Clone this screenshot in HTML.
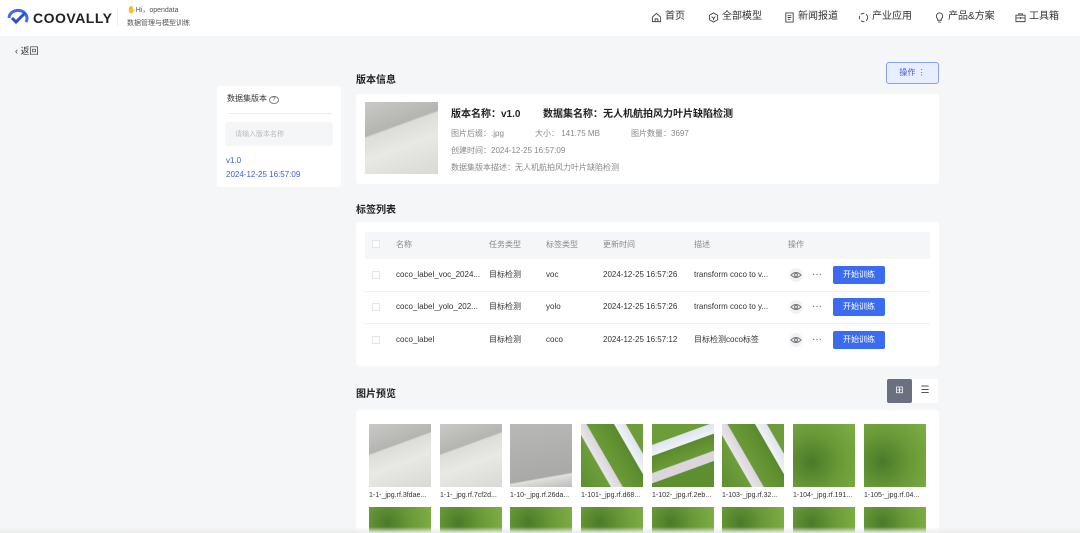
<!DOCTYPE html>
<html style="width:1080px;height:533px;overflow:hidden"><head><meta charset="utf-8"><style>
*{box-sizing:border-box;margin:0;padding:0}
body{width:1080px;height:533px;overflow:hidden;background:#f5f6f8;font-family:"Liberation Sans","Noto Sans CJK SC",sans-serif;color:#333;position:relative}
.abs{position:absolute}
.hdr{left:0;top:0;width:1080px;height:36px;background:#fff}
.nav{top:11px;font-size:10px;line-height:12px;color:#333;display:flex;align-items:center;gap:3px;white-space:nowrap}
.nav svg{width:11px;height:11px}
.card{background:#fff;border-radius:3px}
.t{font-size:8px;line-height:10px;white-space:nowrap}
.g{color:#888}
.btn{background:#3b6cf0;color:#fff;font-size:8px;width:52px;height:18px;border-radius:2px;text-align:center;line-height:18px}
.th{width:62px;height:63px}
.grey{background:linear-gradient(160deg,#c9c9c7 0%,#b4b4b1 35%,#dcdcd9 37%,#e8e8e5 60%,#d8d8d4 100%)}
.green{background:radial-gradient(circle at 30% 60%,#4a7a28,#6a9a38 50%,#7fae45)}
.road{background:linear-gradient(60deg,#5d8f30 0%,#6e9e3a 30%,#e6e6ea 31%,#dcd6dc 42%,#6b9b38 43%,#5a8a2c 70%,#f0f2f6 71%,#dfe4ee 82%,#6d9c3a 83%)}
.lbl{font-size:7px;line-height:9px;color:#333;width:66px;white-space:nowrap;overflow:hidden}
.row2{height:26px}
</style></head><body>
<div class="abs hdr"></div>
<svg class="abs" style="left:6px;top:8px" width="24" height="20" viewBox="0 0 24 20"><path d="M3 10a9 8 0 1 1 17 4" fill="none" stroke="#3b6cf0" stroke-width="3"/><path d="M6 10l4 4 9-9" fill="none" stroke="#2a4fc8" stroke-width="3"/></svg>
<div class="abs" style="left:33px;top:10px;font-size:14px;font-weight:bold;letter-spacing:0.5px;color:#222">COOVALLY</div>
<div class="abs" style="left:117px;top:8px;width:1px;height:18px;background:#eee"></div>
<div class="abs t" style="left:127px;top:6px;font-size:7px;color:#555"><span style="color:#e8a23a">✋</span>Hi，opendata</div>
<div class="abs t" style="left:127px;top:19px;font-size:7px;color:#555">数据管理与模型训练</div>
<div class="abs nav" style="left:651px"><svg viewBox="0 0 12 12"><path d="M1.5 5.5L6 1.5l4.5 4v5h-9z M4.5 10.5v-3h3v3" fill="none" stroke="#444"/></svg>首页</div>
<div class="abs nav" style="left:708px"><svg viewBox="0 0 12 12"><path d="M6 1l4.5 2.5v5L6 11 1.5 8.5v-5z M4 5l2 2 2-2M6 7v2" fill="none" stroke="#444"/></svg>全部模型</div>
<div class="abs nav" style="left:784px"><svg viewBox="0 0 12 12"><path d="M2 1h8v10H2z M4 4h4M4 6h4M4 8h3" fill="none" stroke="#444"/></svg>新闻报道</div>
<div class="abs nav" style="left:858px"><svg viewBox="0 0 12 12"><circle cx="6" cy="6" r="4.5" fill="none" stroke="#444" stroke-dasharray="4 2"/></svg>产业应用</div>
<div class="abs nav" style="left:934px"><svg viewBox="0 0 12 12"><path d="M6 1a3.5 3.5 0 0 0-2 6.3V9h4V7.3A3.5 3.5 0 0 0 6 1z M4.5 11h3" fill="none" stroke="#444"/></svg>产品&amp;方案</div>
<div class="abs nav" style="left:1015px"><svg viewBox="0 0 12 12"><path d="M1 3.5h10v7H1z M4 3.5V2h4v1.5 M1 6.5h10 M6 5.5v2" fill="none" stroke="#444"/></svg>工具箱</div>
<div class="abs t" style="left:15px;top:46px;font-size:9px;color:#333">‹ 返回</div>
<div class="abs card" style="left:217px;top:86px;width:124px;height:101px"></div>
<div class="abs t" style="left:227px;top:94px;color:#333">数据集版本 <span style="border:1px solid #888;border-radius:50%;font-size:6px;padding:0 2px">?</span></div>
<div class="abs" style="left:227px;top:113px;width:105px;height:1px;background:#eee"></div>
<div class="abs" style="left:225px;top:122px;width:108px;height:24px;background:#f5f6f8;border-radius:3px"></div>
<div class="abs t" style="left:235px;top:130px;color:#bbb;font-size:7px">请输入版本名称</div>
<div class="abs t" style="left:226px;top:156px;color:#3b5bdb">v1.0</div>
<div class="abs t" style="left:226px;top:170px;color:#3b5bdb">2024-12-25 16:57:09</div>
<div class="abs" style="left:356px;top:71px;font-size:10px;font-weight:bold;color:#222">版本信息</div>
<div class="abs" style="left:886px;top:62px;width:53px;height:22px;border:1px solid #8aa0f0;background:#e8edff;border-radius:3px;font-size:8px;color:#3b5bdb;text-align:center;line-height:20px">操作 ⋮</div>
<div class="abs card" style="left:356px;top:94px;width:583px;height:90px"></div>
<div class="abs grey" style="left:365px;top:102px;width:73px;height:72px"></div>
<div class="abs t" style="left:451px;top:109px;font-size:10px;line-height:12px;font-weight:bold;color:#222">版本名称：v1.0</div>
<div class="abs t" style="left:543px;top:109px;font-size:10px;line-height:12px;font-weight:bold;color:#222">数据集名称：无人机航拍风力叶片缺陷检测</div>
<div class="abs t g" style="left:451px;top:129px">图片后缀：.jpg</div>
<div class="abs t g" style="left:535px;top:129px">大小：&nbsp;141.75 MB</div>
<div class="abs t g" style="left:631px;top:129px">图片数量：3697</div>
<div class="abs t g" style="left:451px;top:146px">创建时间：2024-12-25 16:57:09</div>
<div class="abs t g" style="left:451px;top:163px">数据集版本描述：无人机航拍风力叶片缺陷检测</div>
<div class="abs" style="left:356px;top:201px;font-size:10px;font-weight:bold;color:#222">标签列表</div>
<div class="abs card" style="left:356px;top:222px;width:583px;height:144px"></div>
<div class="abs" style="left:365px;top:232px;width:565px;height:27px;background:#f5f6f8"></div>
<div class="abs" style="left:365px;top:291px;width:565px;height:1px;background:#f0f0f0"></div>
<div class="abs" style="left:365px;top:323px;width:565px;height:1px;background:#f0f0f0"></div>
<div class="abs t g" style="left:396px;top:240px">名称</div><div class="abs t g" style="left:489px;top:240px">任务类型</div><div class="abs t g" style="left:546px;top:240px">标签类型</div><div class="abs t g" style="left:603px;top:240px">更新时间</div><div class="abs t g" style="left:694px;top:240px">描述</div><div class="abs t g" style="left:788px;top:240px">操作</div>
<div class="abs" style="left:372px;top:240px;width:8px;height:8px;border:1px solid #e5e5e5;background:#fff"></div>
<div class="abs" style="left:372px;top:271px;width:8px;height:8px;border:1px solid #e5e5e5"></div>
<div class="abs" style="left:372px;top:303px;width:8px;height:8px;border:1px solid #e5e5e5"></div>
<div class="abs" style="left:372px;top:336px;width:8px;height:8px;border:1px solid #e5e5e5"></div>
<div class="abs t" style="left:396px;top:270px">coco_label_voc_2024...</div><div class="abs t" style="left:489px;top:270px">目标检测</div><div class="abs t" style="left:546px;top:270px">voc</div><div class="abs t" style="left:603px;top:270px">2024-12-25 16:57:26</div><div class="abs t" style="left:694px;top:270px">transform coco to v...</div>
<div class="abs t" style="left:396px;top:302px">coco_label_yolo_202...</div><div class="abs t" style="left:489px;top:302px">目标检测</div><div class="abs t" style="left:546px;top:302px">yolo</div><div class="abs t" style="left:603px;top:302px">2024-12-25 16:57:26</div><div class="abs t" style="left:694px;top:302px">transform coco to y...</div>
<div class="abs t" style="left:396px;top:335px">coco_label</div><div class="abs t" style="left:489px;top:335px">目标检测</div><div class="abs t" style="left:546px;top:335px">coco</div><div class="abs t" style="left:603px;top:335px">2024-12-25 16:57:12</div><div class="abs t" style="left:694px;top:335px">目标检测coco标签</div>
<svg class="abs" style="left:787px;top:267px" width="18" height="80" viewBox="0 0 18 80"><g fill="none" stroke="#777"><circle cx="9" cy="8" r="7" fill="#f1f2f5" stroke="none"/><path d="M4 8q5-5 10 0q-5 5-10 0z"/><circle cx="9" cy="8" r="1.5"/><circle cx="9" cy="40" r="7" fill="#f1f2f5" stroke="none"/><path d="M4 40q5-5 10 0q-5 5-10 0z"/><circle cx="9" cy="40" r="1.5"/><circle cx="9" cy="73" r="7" fill="#f1f2f5" stroke="none"/><path d="M4 73q5-5 10 0q-5 5-10 0z"/><circle cx="9" cy="73" r="1.5"/></g></svg>
<div class="abs t g" style="left:812px;top:270px;font-size:10px;color:#555">···</div><div class="abs btn" style="left:833px;top:266px">开始训练</div>
<div class="abs t g" style="left:812px;top:302px;font-size:10px;color:#555">···</div><div class="abs btn" style="left:833px;top:298px">开始训练</div>
<div class="abs t g" style="left:812px;top:335px;font-size:10px;color:#555">···</div><div class="abs btn" style="left:833px;top:331px">开始训练</div>
<div class="abs" style="left:356px;top:385px;font-size:10px;font-weight:bold;color:#222">图片预览</div>
<div class="abs" style="left:887px;top:379px;width:25px;height:24px;background:#6b7080;border-radius:2px;color:#fff;font-size:10px;text-align:center;line-height:24px">⊞</div>
<div class="abs" style="left:912px;top:379px;width:26px;height:24px;background:#fff;color:#555;font-size:10px;text-align:center;line-height:24px">☰</div>
<div class="abs card" style="left:356px;top:410px;width:583px;height:123px"></div>
<div class="abs th grey" style="left:369px;top:424px"></div>
<div class="abs th grey" style="left:440px;top:424px"></div>
<div class="abs th" style="left:510px;top:424px;background:linear-gradient(170deg,#b8b8b6,#a9a9a7 80%,#e0e0dc 82%,#bbb)"></div>
<div class="abs th road" style="left:581px;top:424px"></div>
<div class="abs th road" style="left:652px;top:424px;background:linear-gradient(-20deg,#5d8f30 30%,#dcd6dc 31%,#dcd6dc 42%,#6b9b38 43%,#5a8a2c 62%,#eef2f8 63%,#dfe4ee 75%,#6d9c3a 76%)"></div>
<div class="abs th road" style="left:722px;top:424px"></div>
<div class="abs th green" style="left:793px;top:424px"></div>
<div class="abs th green" style="left:864px;top:424px"></div>
<div class="abs lbl" style="left:369px;top:491px">1-1-_jpg.rf.3fdae...</div>
<div class="abs lbl" style="left:440px;top:491px">1-1-_jpg.rf.7cf2d...</div>
<div class="abs lbl" style="left:510px;top:491px">1-10-_jpg.rf.26da...</div>
<div class="abs lbl" style="left:581px;top:491px">1-101-_jpg.rf.d68...</div>
<div class="abs lbl" style="left:652px;top:491px">1-102-_jpg.rf.2eb...</div>
<div class="abs lbl" style="left:722px;top:491px">1-103-_jpg.rf.32...</div>
<div class="abs lbl" style="left:793px;top:491px">1-104-_jpg.rf.191...</div>
<div class="abs lbl" style="left:864px;top:491px">1-105-_jpg.rf.04...</div>
<div class="abs th green row2" style="left:369px;top:507px"></div><div class="abs th green row2" style="left:440px;top:507px"></div><div class="abs th green row2" style="left:510px;top:507px"></div><div class="abs th green row2" style="left:581px;top:507px"></div><div class="abs th green row2" style="left:652px;top:507px"></div><div class="abs th green row2" style="left:722px;top:507px"></div><div class="abs th green row2" style="left:793px;top:507px"></div><div class="abs th green row2" style="left:864px;top:507px"></div>
<div class="abs" style="left:0;top:527px;width:1080px;height:6px;background:linear-gradient(#fff0,#ececec)"></div>
</body></html>
